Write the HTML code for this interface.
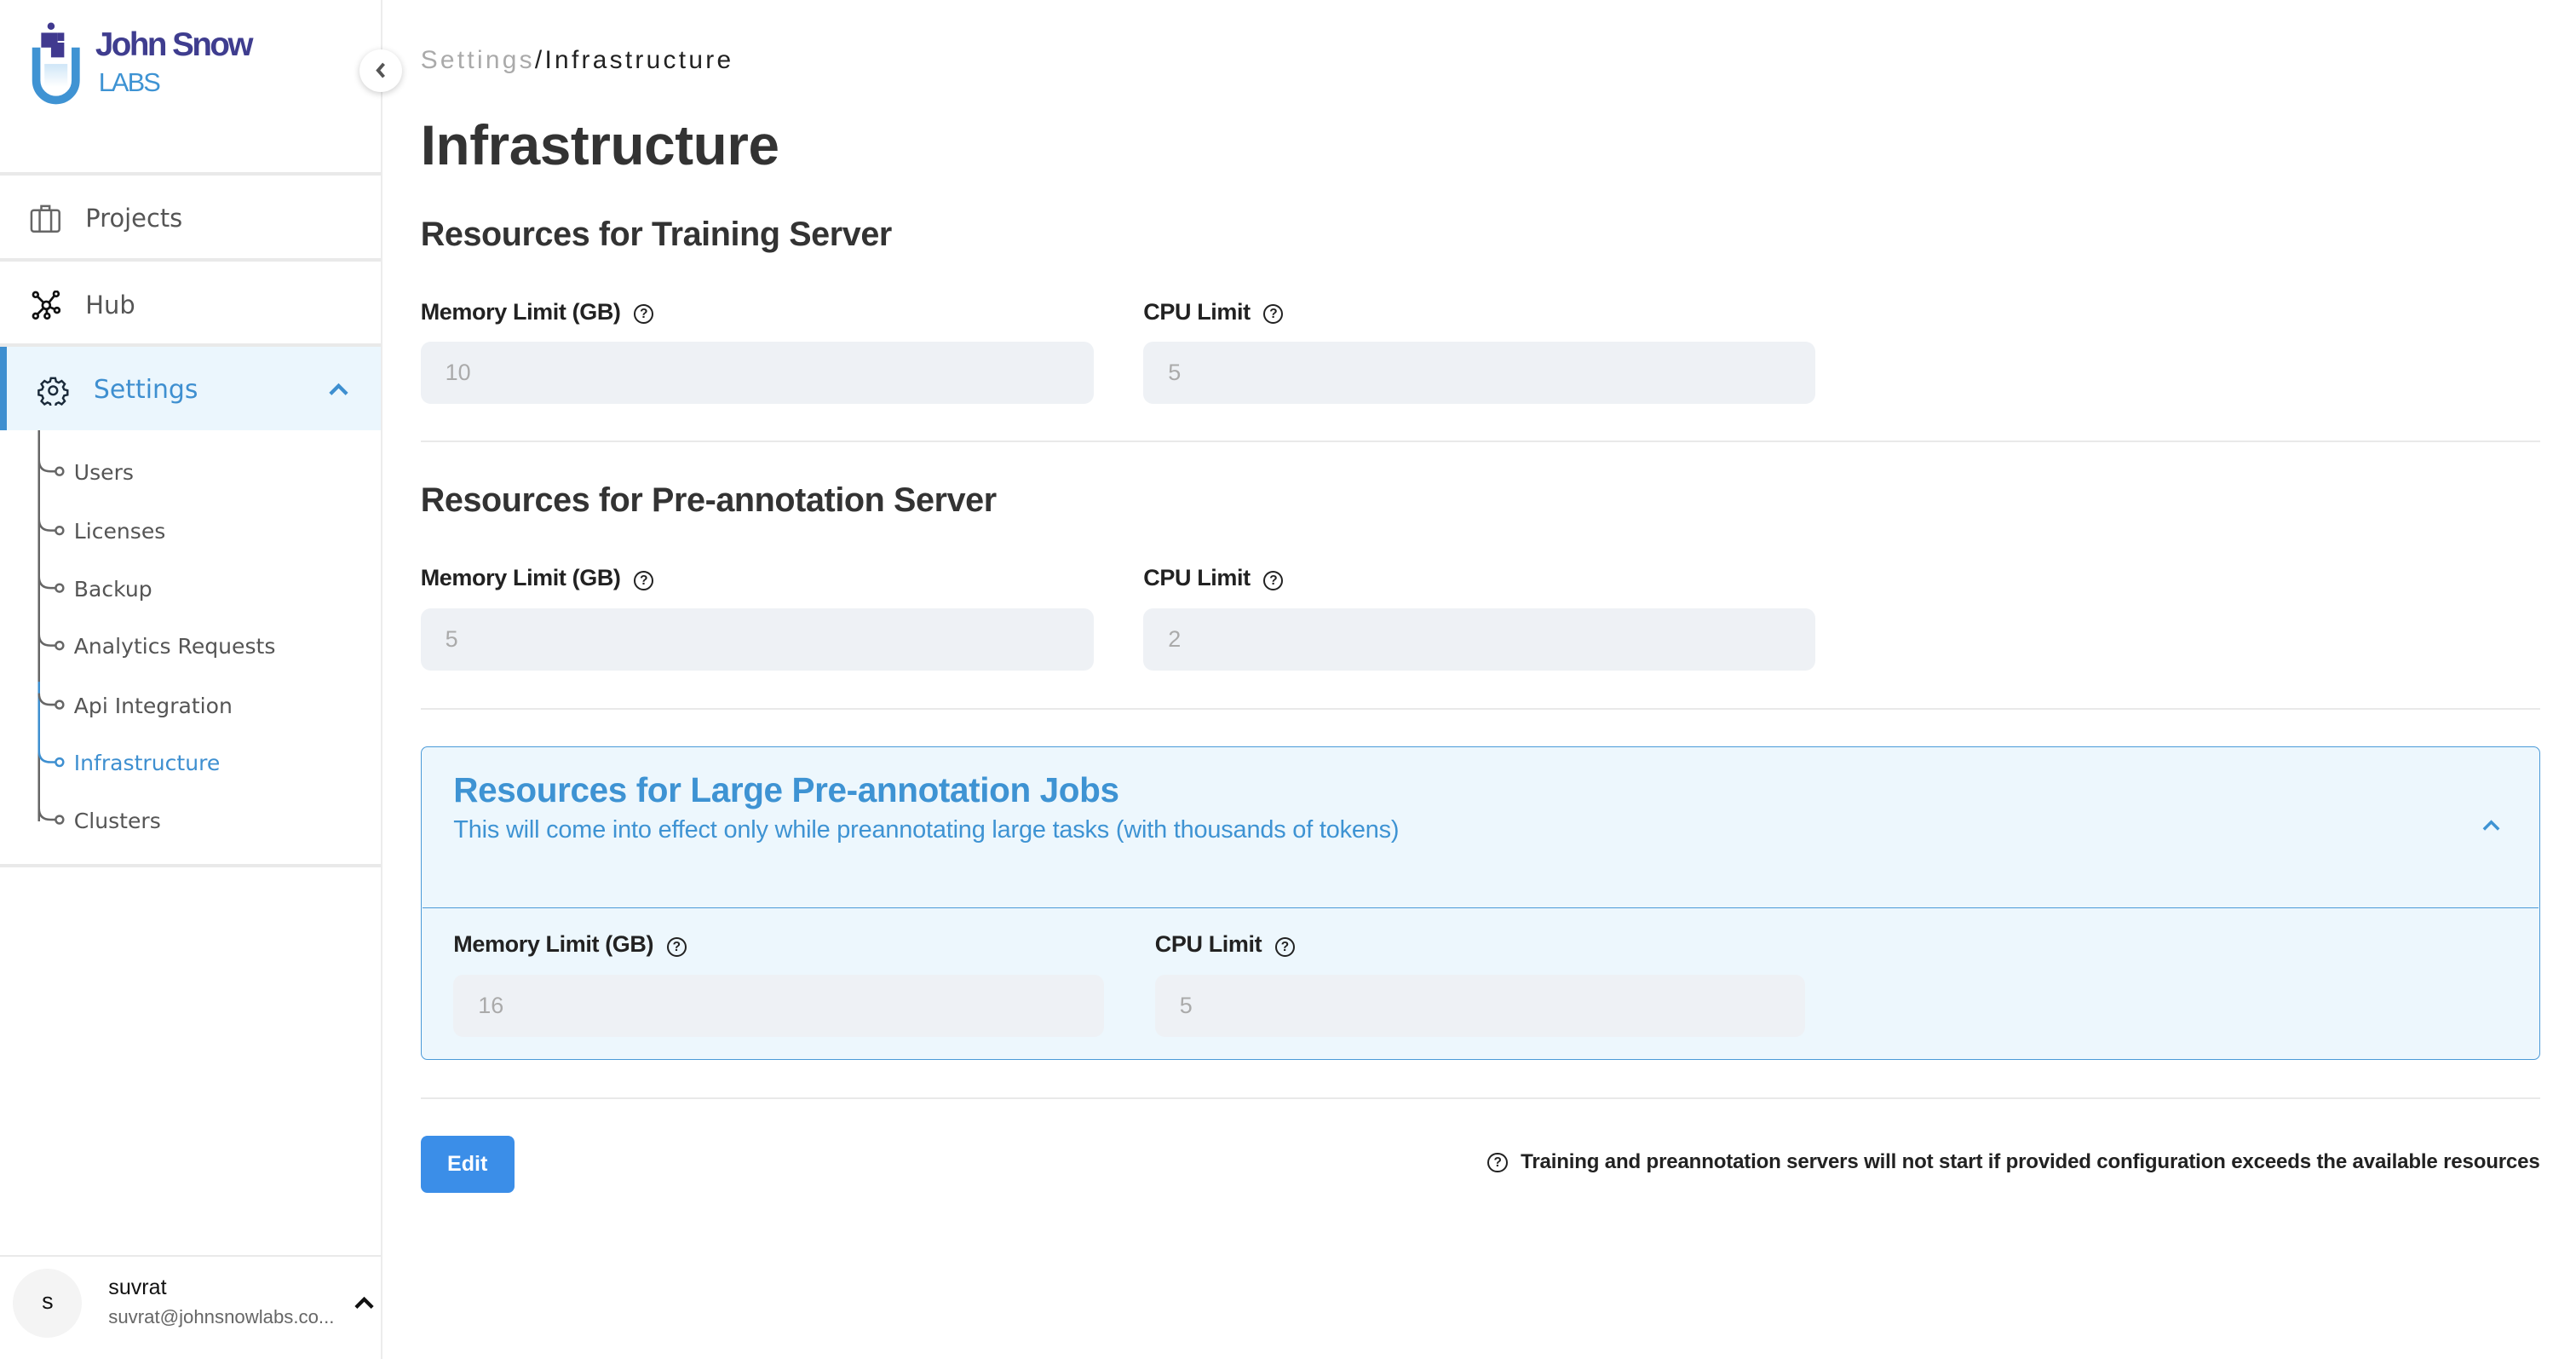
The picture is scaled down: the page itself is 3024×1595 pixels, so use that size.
<!DOCTYPE html>
<html><head><meta charset="utf-8">
<style>
html,body{margin:0;padding:0;background:#fff;overflow:hidden}
#root{position:relative;width:1568px;height:827px;zoom:1.928571;font-family:"Liberation Sans",Arial,sans-serif;color:#333}
.a{position:absolute;white-space:nowrap}
.hr{position:absolute;height:1px;background:#e9e9e9}
.nav{font-family:"DejaVu Sans","Liberation Sans",sans-serif;color:#555}
.lbl{font-size:14px;font-weight:bold;color:#222;letter-spacing:-0.2px}
.inp{position:absolute;height:38px;background:#eef1f5;border-radius:6px;font-size:14px;color:#aaa;line-height:38px;box-sizing:border-box;padding-left:15px}
.q{display:inline-block;width:10px;height:10px;border:1.3px solid #222;border-radius:50%;font-size:8px;line-height:10px;text-align:center;font-weight:bold;vertical-align:1px;margin-left:8px}
.h2{font-size:20.5px;font-weight:bold;color:#333;letter-spacing:-0.2px}
</style></head><body>
<div id="root">
<!-- sidebar -->
<div class="a" style="left:232px;top:0;width:1px;height:827px;background:#ececec"></div>
<svg class="a" style="left:16px;top:12px" width="36" height="54" viewBox="0 0 36 54">
<defs><linearGradient id="g" x1="0" y1="0" x2="0" y2="1"><stop offset="0" stop-color="#cfe6f7"/><stop offset="1" stop-color="#fff"/></linearGradient></defs>
<path d="M6 17 V37 a12 12 0 0 0 24 0 V17" fill="none" stroke="#3f93d3" stroke-width="5"/>
<rect x="11" y="27" width="14" height="14" fill="url(#g)"/>
<circle cx="15" cy="4" r="2.2" fill="#40398f"/>
<rect x="9" y="8" width="10" height="9" fill="#40398f"/>
<rect x="15" y="14" width="8" height="9" fill="#40398f"/>
<rect x="19" y="8" width="4" height="5" fill="#40398f"/>
</svg>
<div class="a" style="left:58px;top:16px;font-size:20px;font-weight:bold;color:#3f3d8f;letter-spacing:-1.3px">John Snow</div>
<div class="a" style="left:60px;top:41px;font-size:16px;color:#3e93d3;letter-spacing:-1px">LABS</div>
<div class="a" style="left:219px;top:30px;width:26px;height:26px;border-radius:50%;background:#fff;box-shadow:0 1px 4px rgba(0,0,0,.2)"></div>
<svg class="a" style="left:227px;top:37px" width="10" height="12" viewBox="0 0 10 12"><path d="M6.5 2 L3 6 L6.5 10" fill="none" stroke="#555" stroke-width="2"/></svg>

<div class="hr" style="left:0;top:105px;width:232px;height:2px"></div>
<svg class="a" style="left:18px;top:124px" width="20" height="18" viewBox="0 0 20 18"><rect x="1" y="4" width="17" height="13" rx="1.5" fill="none" stroke="#666" stroke-width="1.3"/><path d="M7 4 V1.5 h5 V4 M6 4 V17 M13 4 V17" fill="none" stroke="#666" stroke-width="1.3"/></svg>
<div class="a nav" style="left:52px;top:124px;font-size:15px">Projects</div>
<div class="hr" style="left:0;top:157px;width:232px;height:2px"></div>
<svg class="a" style="left:19px;top:177px" width="18" height="18" viewBox="0 0 18 18" fill="none" stroke="#111" stroke-width="1.4"><circle cx="9" cy="9" r="2.3"/><circle cx="2.5" cy="2.5" r="1.5"/><circle cx="15" cy="2" r="1.5"/><circle cx="2.5" cy="15.5" r="1.5"/><circle cx="9.5" cy="15.5" r="1.5"/><circle cx="15.5" cy="12" r="1.5"/><path d="M3.5 3.5 L7.3 7.3 M14 3 L10.6 7.3 M3.5 14.5 L7.3 10.7 M9.3 11.3 V14 M11 10 L14.2 11.4"/></svg>
<div class="a nav" style="left:52px;top:177px;font-size:15px">Hub</div>
<div class="hr" style="left:0;top:209px;width:232px;height:2px"></div>
<div class="a" style="left:0;top:211px;width:232px;height:51px;background:#ebf6fd"></div>
<div class="a" style="left:0;top:211px;width:4px;height:51px;background:#3e8fd0"></div>
<svg class="a" style="left:23px;top:228px" width="19" height="19" viewBox="0 0 24 24" fill="none" stroke="#1a2a3a" stroke-width="1.6"><circle cx="12" cy="12" r="3.2"/><path d="M10.3 2.5h3.4l.6 2.6 2 .9 2.3-1.4 2.4 2.4-1.4 2.3.9 2 2.6.6v3.4l-2.6.6-.9 2 1.4 2.3-2.4 2.4-2.3-1.4-2 .9-.6 2.6h-3.4l-.6-2.6-2-.9-2.3 1.4-2.4-2.4 1.4-2.3-.9-2-2.6-.6v-3.4l2.6-.6.9-2-1.4-2.3 2.4-2.4 2.3 1.4 2-.9z"/></svg>
<div class="a nav" style="left:57px;top:228px;font-size:15.5px;color:#3e8fd0">Settings</div>
<svg class="a" style="left:199px;top:232px" width="14" height="10" viewBox="0 0 14 10"><path d="M2 8 L7 3 L12 8" fill="none" stroke="#3e8fd0" stroke-width="2.2"/></svg>

<svg class="a" style="left:20px;top:262px" width="24" height="250" viewBox="0 0 24 250" fill="none" stroke-width="1.3">
<path d="M3.5 0 V238" stroke="#666"/>
<path d="M3.5 153 V196" stroke="#3e8fd0"/>
<g stroke="#666"><path d="M3.5 18 q0 7 7 7 h3"/><circle cx="16" cy="25" r="2.3"/>
<path d="M3.5 54 q0 7 7 7 h3"/><circle cx="16" cy="61" r="2.3"/>
<path d="M3.5 89 q0 7 7 7 h3"/><circle cx="16" cy="96" r="2.3"/>
<path d="M3.5 124 q0 7 7 7 h3"/><circle cx="16" cy="131" r="2.3"/>
<path d="M3.5 160 q0 7 7 7 h3"/><circle cx="16" cy="167" r="2.3"/>
<path d="M3.5 230 q0 7 7 7 h3"/><circle cx="16" cy="237" r="2.3"/></g>
<g stroke="#3e8fd0"><path d="M3.5 195 q0 7 7 7 h3"/><circle cx="16" cy="202" r="2.3"/></g>
</svg>
<div class="a nav" style="left:45px;top:280px;font-size:13px">Users</div>
<div class="a nav" style="left:45px;top:316px;font-size:13px">Licenses</div>
<div class="a nav" style="left:45px;top:351px;font-size:13px">Backup</div>
<div class="a nav" style="left:45px;top:386px;font-size:13px">Analytics Requests</div>
<div class="a nav" style="left:45px;top:422px;font-size:13px">Api Integration</div>
<div class="a nav" style="left:45px;top:457px;font-size:13px;color:#3e8fd0">Infrastructure</div>
<div class="a nav" style="left:45px;top:492px;font-size:13px">Clusters</div>
<div class="hr" style="left:0;top:526px;width:232px;height:2px"></div>

<div class="hr" style="left:0;top:764px;width:232px"></div>
<div class="a" style="left:8px;top:772px;width:42px;height:42px;border-radius:50%;background:#f4f4f4;text-align:center;line-height:40px;font-size:14px;color:#111">s</div>
<div class="a" style="left:66px;top:776px;font-size:13px;color:#111">suvrat</div>
<div class="a" style="left:66px;top:795px;font-size:11.5px;color:#666">suvrat@johnsnowlabs.co...</div>
<svg class="a" style="left:215px;top:788px" width="13" height="9" viewBox="0 0 13 9"><path d="M1.5 7.5 L6.5 2.5 L11.5 7.5" fill="none" stroke="#111" stroke-width="2.2"/></svg>

<!-- main -->
<div class="a" style="left:256px;top:28px;font-size:15.5px;letter-spacing:1.7px"><span style="color:#aaa">Settings</span><span style="color:#222">/Infrastructure</span></div>
<div class="a" style="left:256px;top:69px;font-size:34px;font-weight:bold;color:#333;letter-spacing:-0.2px">Infrastructure</div>

<div class="a h2" style="left:256px;top:131px">Resources for Training Server</div>
<div class="a lbl" style="left:256px;top:182px">Memory Limit (GB)<span class="q">?</span></div>
<div class="a lbl" style="left:696px;top:182px">CPU Limit<span class="q">?</span></div>
<div class="inp" style="left:256px;top:208px;width:410px">10</div>
<div class="inp" style="left:696px;top:208px;width:409px">5</div>
<div class="hr" style="left:256px;top:268px;width:1290px"></div>

<div class="a h2" style="left:256px;top:293px">Resources for Pre-annotation Server</div>
<div class="a lbl" style="left:256px;top:344px">Memory Limit (GB)<span class="q">?</span></div>
<div class="a lbl" style="left:696px;top:344px">CPU Limit<span class="q">?</span></div>
<div class="inp" style="left:256px;top:370px;width:410px">5</div>
<div class="inp" style="left:696px;top:370px;width:409px">2</div>
<div class="hr" style="left:256px;top:431px;width:1290px"></div>

<div class="a" style="left:256px;top:454px;width:1290px;height:191px;box-sizing:border-box;border:1px solid #4b9ad8;border-radius:4px;background:#edf7fd"></div>
<div class="a h2" style="left:276px;top:469px;color:#3e93d3;font-size:21px">Resources for Large Pre-annotation Jobs</div>
<div class="a" style="left:276px;top:497px;font-size:15px;color:#3e93d3;letter-spacing:-0.1px">This will come into effect only while preannotating large tasks (with thousands of tokens)</div>
<svg class="a" style="left:1510px;top:498px" width="13" height="9" viewBox="0 0 13 9"><path d="M2 7 L6.5 2.5 L11 7" fill="none" stroke="#3e93d3" stroke-width="1.8"/></svg>
<div class="a" style="left:257px;top:552px;width:1288px;height:1px;background:#4b9ad8"></div>
<div class="a lbl" style="left:276px;top:567px">Memory Limit (GB)<span class="q">?</span></div>
<div class="a lbl" style="left:703px;top:567px">CPU Limit<span class="q">?</span></div>
<div class="inp" style="left:276px;top:593px;width:396px">16</div>
<div class="inp" style="left:703px;top:593px;width:396px">5</div>
<div class="hr" style="left:256px;top:668px;width:1290px"></div>

<div class="a" style="left:256px;top:691px;width:57px;height:35px;background:#3b8ee8;border-radius:4px;color:#fff;font-size:13px;font-weight:bold;text-align:center;line-height:35px">Edit</div>
<div class="a" style="right:22px;top:700px;font-size:12.5px;font-weight:bold;color:#222;letter-spacing:-0.1px"><span class="q" style="margin:0 8px 0 0">?</span>Training and preannotation servers will not start if provided configuration exceeds the available resources</div>
</div>
</body></html>
